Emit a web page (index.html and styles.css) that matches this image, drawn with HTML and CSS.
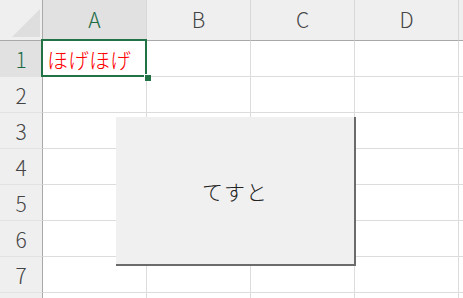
FILE: index.html
```html
<!DOCTYPE html>
<html lang="ja">
<head>
<meta charset="utf-8">
<title>Sheet</title>
<link rel="stylesheet" href="styles.css">
</head>
<body>
<div class="sheet">
  <div class="grid">
    <div class="corner"><div class="tri"></div></div>
    <div class="ch sel">A</div>
    <div class="ch">B</div>
    <div class="ch">C</div>
    <div class="ch">D</div>
    <div class="ch edge"></div>

    <div class="rh sel">1</div>
    <div class="c text">ほげほげ</div><div class="c"></div><div class="c"></div><div class="c"></div><div class="c edge"></div>
    <div class="rh">2</div>
    <div class="c"></div><div class="c"></div><div class="c"></div><div class="c"></div><div class="c edge"></div>
    <div class="rh">3</div>
    <div class="c"></div><div class="c"></div><div class="c"></div><div class="c"></div><div class="c edge"></div>
    <div class="rh">4</div>
    <div class="c"></div><div class="c"></div><div class="c"></div><div class="c"></div><div class="c edge"></div>
    <div class="rh">5</div>
    <div class="c"></div><div class="c"></div><div class="c"></div><div class="c"></div><div class="c edge"></div>
    <div class="rh">6</div>
    <div class="c"></div><div class="c"></div><div class="c"></div><div class="c"></div><div class="c edge"></div>
    <div class="rh">7</div>
    <div class="c"></div><div class="c"></div><div class="c"></div><div class="c"></div><div class="c edge"></div>
    <div class="rh last"></div>
    <div class="c last"></div><div class="c last"></div><div class="c last"></div><div class="c last"></div><div class="c last edge"></div>
  </div>
  <div class="selection"><div class="handle"></div></div>
  <div class="button">てすと</div>
</div>
</body>
</html>
```

FILE: styles.css
```css
html, body {
  margin: 0;
  padding: 0;
  background: #ffffff;
}
.sheet {
  position: relative;
  width: 463px;
  height: 298px;
  overflow: hidden;
  font-family: "Noto Sans CJK JP", "Noto Sans", sans-serif;
}
.grid {
  display: grid;
  grid-template-columns: 43px repeat(4, 104px) 1fr;
  grid-template-rows: 41px repeat(7, 36px) 1fr;
  width: 463px;
  height: 298px;
}
.grid > div {
  box-sizing: border-box;
}
.corner {
  background: #efefef;
  border-right: 1px solid #a9a9a9;
  border-bottom: 1px solid #a9a9a9;
  position: relative;
}
.tri {
  position: absolute;
  left: 12px;
  top: 9px;
  width: 28px;
  height: 28px;
  background: #dedede;
  clip-path: polygon(100% 0, 100% 100%, 0 100%);
}
.ch {
  background: #efefef;
  border-right: 1px solid #d8d8d8;
  border-bottom: 1px solid #a9a9a9;
  display: flex;
  align-items: center;
  justify-content: center;
  font-size: 21px;
  font-weight: 300;
  color: #444444;
  padding-bottom: 2px;
}
.ch.sel {
  background: #e1e1e1;
  color: #1d6b45;
}
.ch.edge {
  border-right: none;
}
.rh {
  background: #efefef;
  border-right: 1px solid #a9a9a9;
  border-bottom: 1px solid #e2e2e2;
  display: flex;
  align-items: center;
  justify-content: center;
  font-size: 21px;
  font-weight: 300;
  color: #444444;
}
.rh.sel {
  background: #e1e1e1;
  color: #1d6b45;
}
.rh.last {
  border-bottom: none;
}
.c {
  border-right: 1px solid #dcdcdc;
  border-bottom: 1px solid #dcdcdc;
}
.c.edge {
  border-right: none;
}
.c.last {
  border-bottom: none;
}
.text {
  display: flex;
  align-items: center;
  padding-left: 4px;
  font-size: 21px;
  font-weight: 300;
  color: #ff0000;
  white-space: nowrap;
}
.selection {
  position: absolute;
  left: 41px;
  top: 39px;
  width: 102px;
  height: 34px;
  border: 2px solid #217346;
}
.handle {
  position: absolute;
  right: -6px;
  bottom: -6px;
  width: 6px;
  height: 6px;
  background: #217346;
  border-left: 1px solid #ffffff;
  border-top: 1px solid #ffffff;
}
.button {
  position: absolute;
  left: 116px;
  top: 117px;
  width: 238px;
  height: 147px;
  background: #f0f0f0;
  border-right: 2px solid #6b6b6b;
  border-bottom: 2px solid #6b6b6b;
  display: flex;
  align-items: center;
  justify-content: center;
  font-size: 21px;
  font-weight: 300;
  color: #222222;
  letter-spacing: 1px;
}
```
